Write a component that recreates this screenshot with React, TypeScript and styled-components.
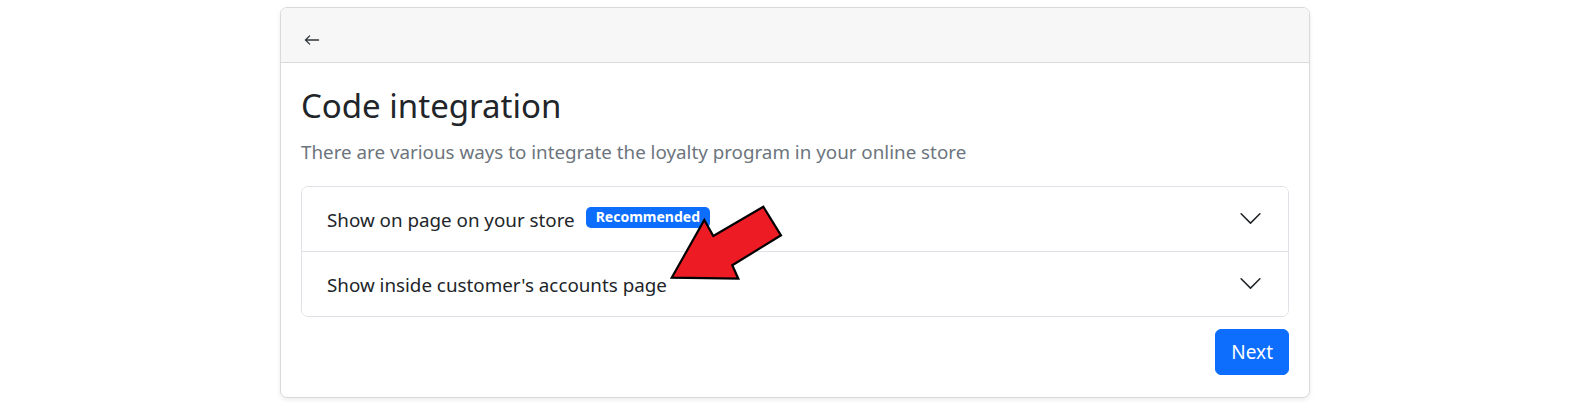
import React from "react";
import styled, { createGlobalStyle } from "styled-components";

const GlobalStyle = createGlobalStyle`
  html, body {
    margin: 0;
    padding: 0;
    background: #fff;
  }
  body {
    font-family: "Noto Sans", "Open Sans", sans-serif;
    color: #212529;
    -webkit-font-smoothing: antialiased;
  }
`;

interface Section {
  id: string;
  title: string;
  recommended?: boolean;
}

const sections: Section[] = [
  { id: "page", title: "Show on page on your store", recommended: true },
  { id: "account", title: "Show inside customer's accounts page" },
];

const Page = styled.div`
  position: relative;
  padding: 7px 0 0 280px;
  height: 403px;
  box-sizing: border-box;
`;

const Card = styled.div`
  width: 1030px;
  box-sizing: border-box;
  border: 1px solid #dadada;
  border-radius: 7px;
  box-shadow: 0 2px 5px rgba(0, 0, 0, 0.075);
  background: #fff;
  overflow: hidden;
`;

const CardHeader = styled.div`
  display: flex;
  align-items: flex-start;
  height: 55px;
  box-sizing: border-box;
  padding: 24px 23px 0;
  background: #f7f7f7;
  border-bottom: 1px solid #dadada;
`;

const BackButton = styled.button`
  display: flex;
  align-items: center;
  justify-content: center;
  width: 16px;
  height: 16px;
  padding: 0;
  border: 0;
  background: transparent;
  color: #212529;
  cursor: pointer;
`;

const CardBody = styled.div`
  padding: 20px 20px 22px;
`;

const Title = styled.h1`
  margin: 0 0 12px;
  padding-top: 3px;
  font-size: 33px;
  font-weight: 400;
  line-height: 1.2;
  color: #212529;
`;

const Subtitle = styled.p`
  margin: 0 0 20px;
  font-size: 18.8px;
  line-height: 1.5;
  color: #6c757d;
`;

const Accordion = styled.div`
  border: 1px solid #dee2e6;
  border-radius: 7px;
  overflow: hidden;
`;

const AccordionButton = styled.button<{ $first: boolean }>`
  display: flex;
  align-items: center;
  width: 100%;
  height: ${({ $first }) => ($first ? "64px" : "65px")};
  box-sizing: border-box;
  padding: 0 25px;
  border: 0;
  border-top: ${({ $first }) => ($first ? "0" : "1px solid #dee2e6")};
  background: #fff;
  font-family: inherit;
  font-size: 18.8px;
  line-height: 30px;
  color: #212529;
  text-align: left;
  cursor: pointer;
`;

const Label = styled.span`
  padding-top: 3px;
`;

const Badge = styled.span`
  margin-left: 11px;
  margin-top: -3px;
  padding: 3.75px 10px;
  border-radius: 5px;
  background: #0d6efd;
  color: #fff;
  font-size: 14px;
  font-weight: 700;
  line-height: 1;
`;

const Chevron = styled.svg`
  flex-shrink: 0;
  margin-left: auto;
  width: 25px;
  height: 25px;
`;

const Footer = styled.div`
  display: flex;
  justify-content: flex-end;
  margin-top: 12px;
`;

const PrimaryButton = styled.button`
  padding: 8px 15px;
  border: 1px solid #0d6efd;
  border-radius: 6px;
  background: #0d6efd;
  color: #fff;
  font-family: inherit;
  font-size: 19px;
  line-height: 28px;
  cursor: pointer;
`;

const Pointer = styled.svg`
  position: absolute;
  left: 665px;
  top: 200px;
  width: 125px;
  height: 86px;
  overflow: visible;
  pointer-events: none;
`;

const ArrowLeft = () => (
  <svg width="16" height="16" viewBox="0 0 16 16" fill="currentColor">
    <path
      fillRule="evenodd"
      stroke="currentColor"
      strokeWidth="0.4"
      d="M15 8a.5.5 0 0 0-.5-.5H2.707l3.147-3.146a.5.5 0 1 0-.708-.708l-4 4a.5.5 0 0 0 0 .708l4 4a.5.5 0 0 0 .708-.708L2.707 8.5H14.5A.5.5 0 0 0 15 8z"
    />
  </svg>
);

const ChevronDown = () => (
  <Chevron viewBox="0 0 16 16" fill="#212529">
    <path
      fillRule="evenodd"
      d="M1.646 4.646a.5.5 0 0 1 .708 0L8 10.293l5.646-5.647a.5.5 0 0 1 .708.708l-6 6a.5.5 0 0 1-.708 0l-6-6a.5.5 0 0 1 0-.708z"
    />
  </Chevron>
);

export default function App() {
  return (
    <Page>
      <GlobalStyle />
      <Card>
        <CardHeader>
          <BackButton aria-label="Back">
            <ArrowLeft />
          </BackButton>
        </CardHeader>
        <CardBody>
          <Title>Code integration</Title>
          <Subtitle>
            There are various ways to integrate the loyalty program in your
            online store
          </Subtitle>
          <Accordion>
            {sections.map((section, i) => (
              <AccordionButton key={section.id} $first={i === 0}>
                <Label>{section.title}</Label>
                {section.recommended && <Badge>Recommended</Badge>}
                <ChevronDown />
              </AccordionButton>
            ))}
          </Accordion>
          <Footer>
            <PrimaryButton>Next</PrimaryButton>
          </Footer>
        </CardBody>
      </Card>
      <Pointer viewBox="0 0 125 86">
        <polygon
          points="6.7,77.7 39.3,20 48.3,36 98.3,6.7 116,35.3 67.3,65.3 73.3,78.7"
          fill="#ed1c24"
          stroke="#000"
          strokeWidth="2.2"
          strokeLinejoin="miter"
        />
      </Pointer>
    </Page>
  );
}
